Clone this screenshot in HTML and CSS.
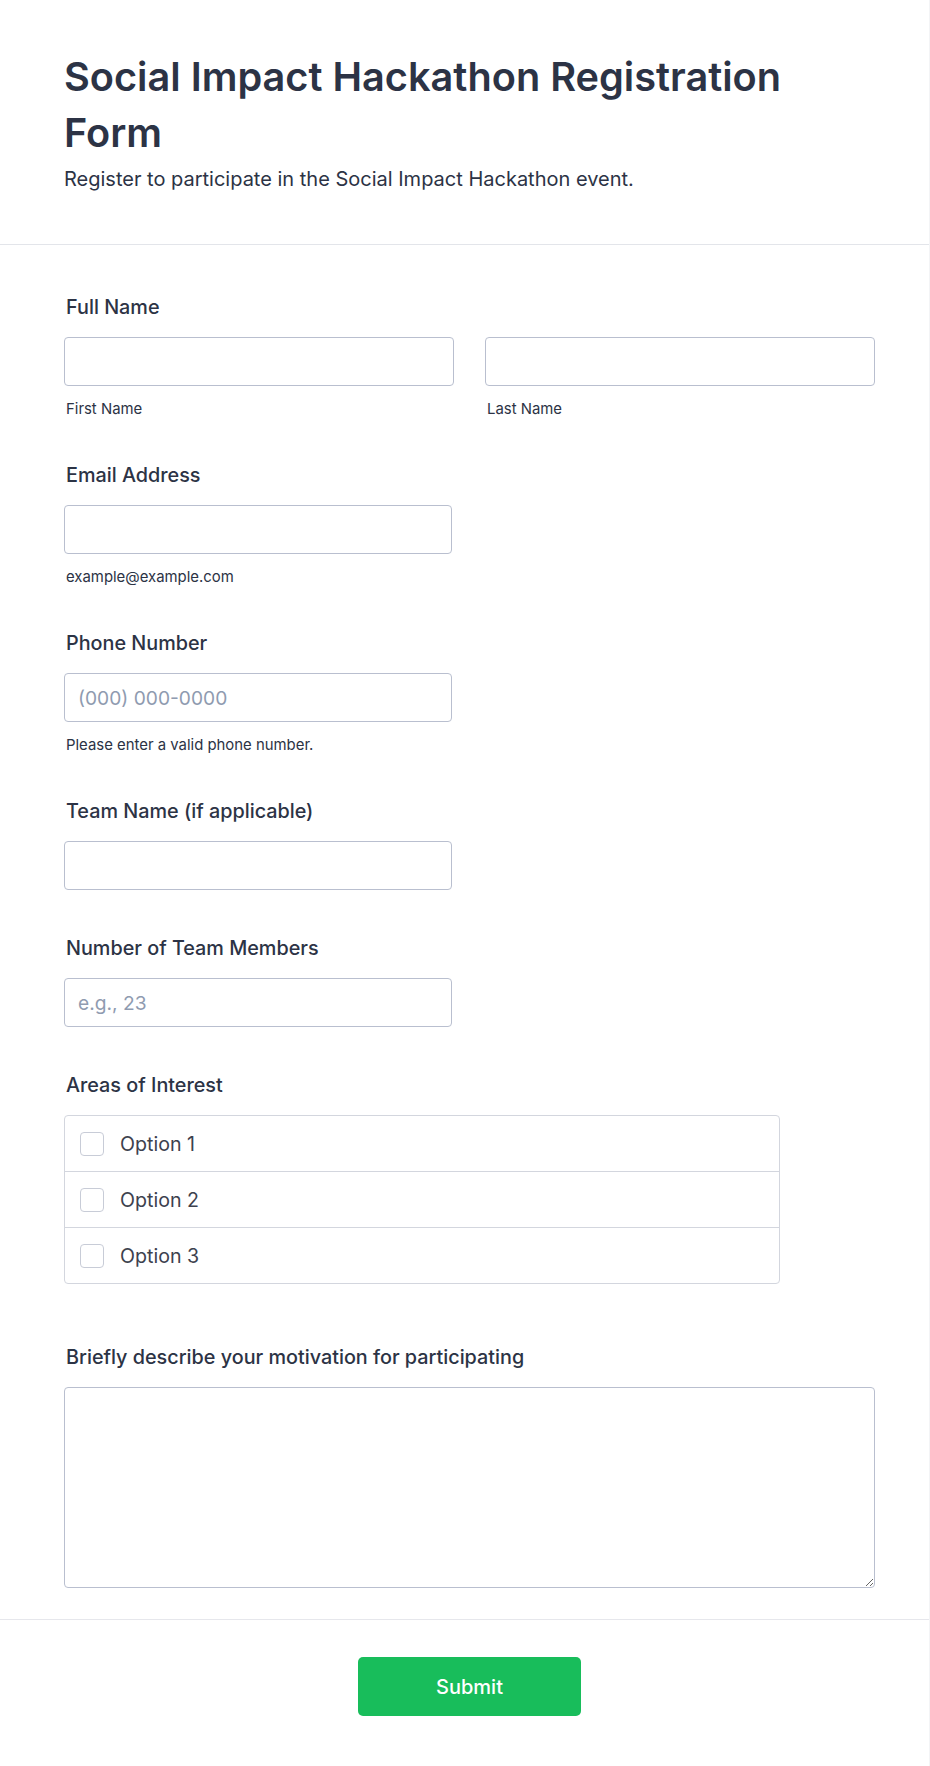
FILE: index.html
```html
<!DOCTYPE html>
<html lang="en">
<head>
<meta charset="utf-8">
<title>Social Impact Hackathon Registration Form</title>
<link rel="stylesheet" href="styles.css">
</head>
<body>
<div class="form">
  <header class="form-header">
    <h1 class="form-title">Social Impact Hackathon Registration Form</h1>
    <p class="form-subtitle">Register to participate in the Social Impact Hackathon event.</p>
  </header>
  <main class="form-body">
    <div class="field">
      <label class="label">Full Name</label>
      <div class="name-row">
        <div class="name-col">
          <input class="input" type="text">
          <span class="sublabel">First Name</span>
        </div>
        <div class="name-col">
          <input class="input" type="text">
          <span class="sublabel">Last Name</span>
        </div>
      </div>
    </div>
    <div class="field">
      <label class="label">Email Address</label>
      <input class="input input-single" type="email">
      <span class="sublabel">example@example.com</span>
    </div>
    <div class="field">
      <label class="label">Phone Number</label>
      <input class="input input-single" type="tel" placeholder="(000) 000-0000">
      <span class="sublabel">Please enter a valid phone number.</span>
    </div>
    <div class="field field-nosub">
      <label class="label">Team Name (if applicable)</label>
      <input class="input input-single" type="text">
    </div>
    <div class="field field-nosub">
      <label class="label">Number of Team Members</label>
      <input class="input input-single" type="text" placeholder="e.g., 23">
    </div>
    <div class="field field-checks">
      <label class="label">Areas of Interest</label>
      <div class="check-list">
        <label class="check-row"><input class="checkbox" type="checkbox"><span class="check-text">Option 1</span></label>
        <label class="check-row"><input class="checkbox" type="checkbox"><span class="check-text">Option 2</span></label>
        <label class="check-row"><input class="checkbox" type="checkbox"><span class="check-text">Option 3</span></label>
      </div>
    </div>
    <div class="field field-last">
      <label class="label">Briefly describe your motivation for participating</label>
      <textarea class="textarea"></textarea>
    </div>
  </main>
  <footer class="form-footer">
    <button class="submit" type="button">Submit</button>
  </footer>
</div>
</body>
</html>
```
FILE: styles.css
```css
* {
  box-sizing: border-box;
}

html, body {
  margin: 0;
  padding: 0;
}

body {
  background: #f3f4f6;
  font-family: Inter, "Noto Sans", "Liberation Sans", sans-serif;
  color: #2c3345;
}

.form {
  width: 929px;
  background: #ffffff;
}

.form-header {
  padding: 49px 55px 53px 64px;
  border-bottom: 1px solid #e3e5ea;
}

.form-title {
  margin: 0;
  font-size: 39.7px;
  line-height: 56px;
  font-weight: 600;
  color: #2c3345;
}

.form-subtitle {
  margin: 6px 0 0;
  font-size: 20px;
  line-height: 24px;
  font-weight: 400;
  color: #2c3345;
}

.form-body {
  padding: 50px 54px 31px 64px;
  border-bottom: 1px solid #e6e7ec;
}

.field {
  margin-bottom: 44px;
}

.field-nosub {
  margin-bottom: 46px;
}

.field-checks {
  margin-bottom: 61px;
}

.field-last {
  margin-bottom: 0;
}

.label {
  display: block;
  font-size: 19.8px;
  line-height: 24px;
  font-weight: 500;
  color: #2c3345;
  margin-bottom: 18px;
  padding-left: 2px;
}

.name-row {
  display: flex;
  gap: 31px;
}

.name-col {
  flex: 1;
  min-width: 0;
}

.input {
  display: block;
  width: 100%;
  height: 49px;
  border: 1px solid #b9bfcf;
  border-radius: 4px;
  padding: 0 13px;
  font-family: inherit;
  font-size: 19.2px;
  color: #2c3345;
  background: #ffffff;
  outline: none;
}

.input::placeholder {
  color: #8f9bb0;
}

.input-single {
  width: 388px;
}

.sublabel {
  display: block;
  margin-top: 13px;
  font-size: 14.9px;
  line-height: 20px;
  color: #2c3345;
  padding-left: 2px;
}

.check-list {
  width: 716px;
  border: 1px solid #d3d6de;
  border-radius: 4px;
}

.check-row {
  display: flex;
  align-items: center;
  gap: 16px;
  height: 56px;
  padding-left: 15px;
  border-bottom: 1px solid #d3d6de;
}

.check-row:last-child {
  height: 55px;
  border-bottom: none;
}

.checkbox {
  appearance: none;
  -webkit-appearance: none;
  margin: 0;
  width: 24px;
  height: 24px;
  border: 1px solid #c8ccd7;
  border-radius: 4px;
  background: #ffffff;
  flex: none;
}

.check-text {
  font-size: 19.6px;
  line-height: 24px;
  color: #3d414e;
}

.textarea {
  display: block;
  width: 100%;
  height: 201px;
  border: 1px solid #b9bfcf;
  border-radius: 4px;
  font-family: inherit;
  font-size: 19px;
  padding: 10px 13px;
  outline: none;
}

.form-footer {
  padding: 37px 54px 50px 64px;
  text-align: center;
}

.submit {
  width: 223px;
  height: 59px;
  border: none;
  border-radius: 5px;
  background: #18bd5b;
  color: #ffffff;
  font-family: inherit;
  font-size: 20px;
  font-weight: 500;
  cursor: pointer;
}
```
